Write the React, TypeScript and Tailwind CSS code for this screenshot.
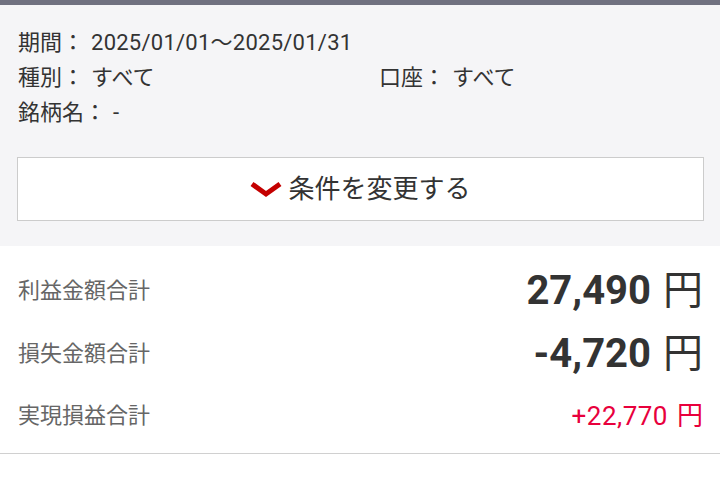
import React from "react";

const font = { fontFamily: 'Roboto, "Noto Sans CJK JP", sans-serif' };

function Row({ label, value, big, red }: { label: string; value: string; big?: boolean; red?: boolean }) {
  return (
    <div className="flex items-center justify-between">
      <span className="text-[22px] text-[#666666] leading-[30px]">{label}</span>
      {big ? (
        <span className="flex items-baseline text-[#333333]">
          <span className="text-[40px] font-bold leading-[50px]">{value}</span>
          <span className="ml-[12px] text-[40px] font-normal leading-[50px]">円</span>
        </span>
      ) : (
        <span className={`flex items-baseline ${red ? "text-[#e8003c]" : "text-[#333333]"}`}>
          <span className="text-[26px] leading-[34px] tracking-[0.5px]">{value}</span>
          <span className="ml-[9px] text-[26px] leading-[34px]">円</span>
        </span>
      )}
    </div>
  );
}

export default function App() {
  return (
    <div className="w-[720px] h-[480px] bg-white overflow-hidden" style={font}>
      <div className="h-[5px] bg-[#707180]" />
      <div className="bg-[#f5f5f7] pt-[20px] pb-[25px] px-[17px]">
        <div className="pl-[1px] text-[22px] leading-[35px] text-[#333333]">
          <div className="flex">
            <span>期間：</span>
            <span className="ml-[7px] tracking-[0.25px]">2025/01/01〜2025/01/31</span>
          </div>
          <div className="flex">
            <div className="w-[361px] flex">
              <span>種別：</span>
              <span className="ml-[7px]">すべて</span>
            </div>
            <div className="flex">
              <span>口座：</span>
              <span className="ml-[7px]">すべて</span>
            </div>
          </div>
          <div className="flex">
            <span>銘柄名：</span>
            <span className="ml-[7px]">-</span>
          </div>
        </div>
        <button className="mt-[27px] w-[687px] h-[64px] bg-white border border-[#cccccc] flex items-center justify-center">
          <svg width="32" height="18" viewBox="0 0 32 18" className="mr-[6px] mt-[2px]">
            <polyline points="2,3 16,13 30,3" fill="none" stroke="#c40000" strokeWidth="5" />
          </svg>
          <span className="text-[26px] text-[#333333] leading-[34px]">条件を変更する</span>
        </button>
      </div>
      <div className="px-[17px] pt-[13px] pb-[6px] border-b border-[#d0d0d0]">
        <div className="h-[64px] flex flex-col justify-center pl-[1px]">
          <Row label="利益金額合計" value="27,490" big />
        </div>
        <div className="h-[62px] flex flex-col justify-center pl-[1px]">
          <Row label="損失金額合計" value="-4,720" big />
        </div>
        <div className="h-[62px] flex flex-col justify-center pl-[1px]">
          <Row label="実現損益合計" value="+22,770" red />
        </div>
      </div>
    </div>
  );
}
